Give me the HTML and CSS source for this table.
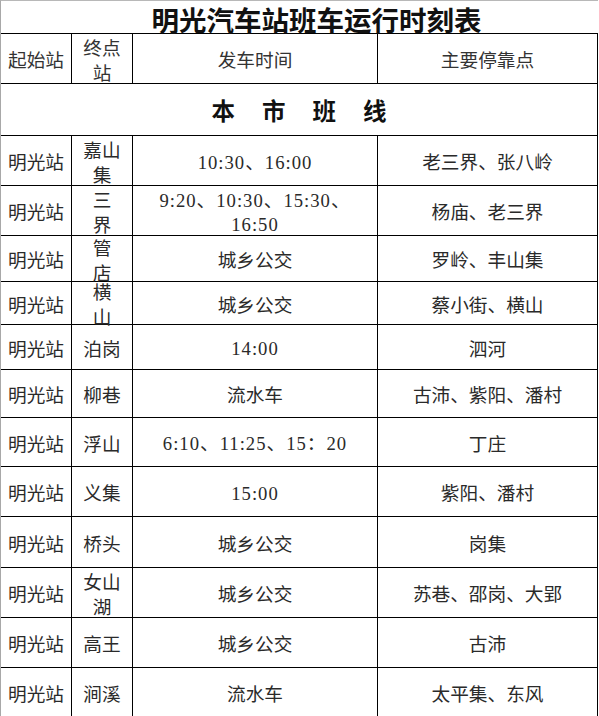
FILE: index.html
```html
<!DOCTYPE html>
<html lang="zh-CN">
<head>
<meta charset="utf-8">
<title>明光汽车站班车运行时刻表</title>
<link rel="stylesheet" href="styles.css">
</head>
<body>
<div class="sheet">
  <div class="cell title">明光汽车站班车运行时刻表</div>

  <div class="cell head">起始站</div>
  <div class="cell head">终点<br>站</div>
  <div class="cell head">发车时间</div>
  <div class="cell head">主要停靠点</div>

  <div class="cell section">本市班线</div>

  <div class="cell">明光站</div><div class="cell">嘉山<br>集</div><div class="cell time">10:30、16:00</div><div class="cell">老三界、张八岭</div>
  <div class="cell">明光站</div><div class="cell">三<br>界</div><div class="cell time">9:20、10:30、15:30、<br>16:50</div><div class="cell">杨庙、老三界</div>
  <div class="cell">明光站</div><div class="cell">管<br>店</div><div class="cell">城乡公交</div><div class="cell">罗岭、丰山集</div>
  <div class="cell">明光站</div><div class="cell">横<br>山</div><div class="cell">城乡公交</div><div class="cell">蔡小街、横山</div>
  <div class="cell">明光站</div><div class="cell">泊岗</div><div class="cell time">14:00</div><div class="cell">泗河</div>
  <div class="cell">明光站</div><div class="cell">柳巷</div><div class="cell">流水车</div><div class="cell">古沛、紫阳、潘村</div>
  <div class="cell">明光站</div><div class="cell">浮山</div><div class="cell time">6:10、11:25、15：20</div><div class="cell">丁庄</div>
  <div class="cell">明光站</div><div class="cell">义集</div><div class="cell time">15:00</div><div class="cell">紫阳、潘村</div>
  <div class="cell">明光站</div><div class="cell">桥头</div><div class="cell">城乡公交</div><div class="cell">岗集</div>
  <div class="cell">明光站</div><div class="cell">女山<br>湖</div><div class="cell">城乡公交</div><div class="cell">苏巷、邵岗、大郢</div>
  <div class="cell">明光站</div><div class="cell">高王</div><div class="cell">城乡公交</div><div class="cell">古沛</div>
  <div class="cell">明光站</div><div class="cell">涧溪</div><div class="cell">流水车</div><div class="cell">太平集、东风</div>
</div>
</body>
</html>
```

FILE: styles.css
```css
html, body {
  margin: 0;
  padding: 0;
  overflow: hidden;
  background: #ffffff;
}

.sheet {
  display: grid;
  grid-template-columns: 71px 61px 245px 220px;
  grid-template-rows: 33px 50px 52px 50px 50px 46px 43px 45px 48px 49px 50px 51px 50px 50px 50px;
  width: 598px;
  box-sizing: border-box;
  border-left: 1px solid #a8a8a8;
  border-top: 1px solid #b8b8b8;
  font-family: "Liberation Serif", "Noto Sans CJK SC", serif;
  font-size: 18.67px;
  line-height: 25px;
  color: #2a2a2a;
}

.cell {
  box-sizing: border-box;
  border-right: 1px solid #000;
  border-bottom: 1px solid #000;
  display: flex;
  align-items: center;
  justify-content: center;
  text-align: center;
  overflow: visible;
  white-space: nowrap;
  min-width: 0;
  min-height: 0;
  padding-top: 4px;
}

.time {
  letter-spacing: 1px;
  line-height: 24px;
}

.title {
  grid-column: 1 / -1;
  border-right: none;
  font-family: "Noto Sans CJK SC", sans-serif;
  font-weight: 700;
  font-size: 27.5px;
  line-height: 30px;
  color: #111;
  padding-left: 34px;
  padding-top: 4px;
}

.head {
  color: #333;
}

.section {
  grid-column: 1 / -1;
  font-family: "Noto Sans CJK SC", sans-serif;
  font-weight: 700;
  font-size: 23.5px;
  letter-spacing: 27px;
  padding-left: 27px;
  padding-top: 1px;
  color: #111;
}
```
